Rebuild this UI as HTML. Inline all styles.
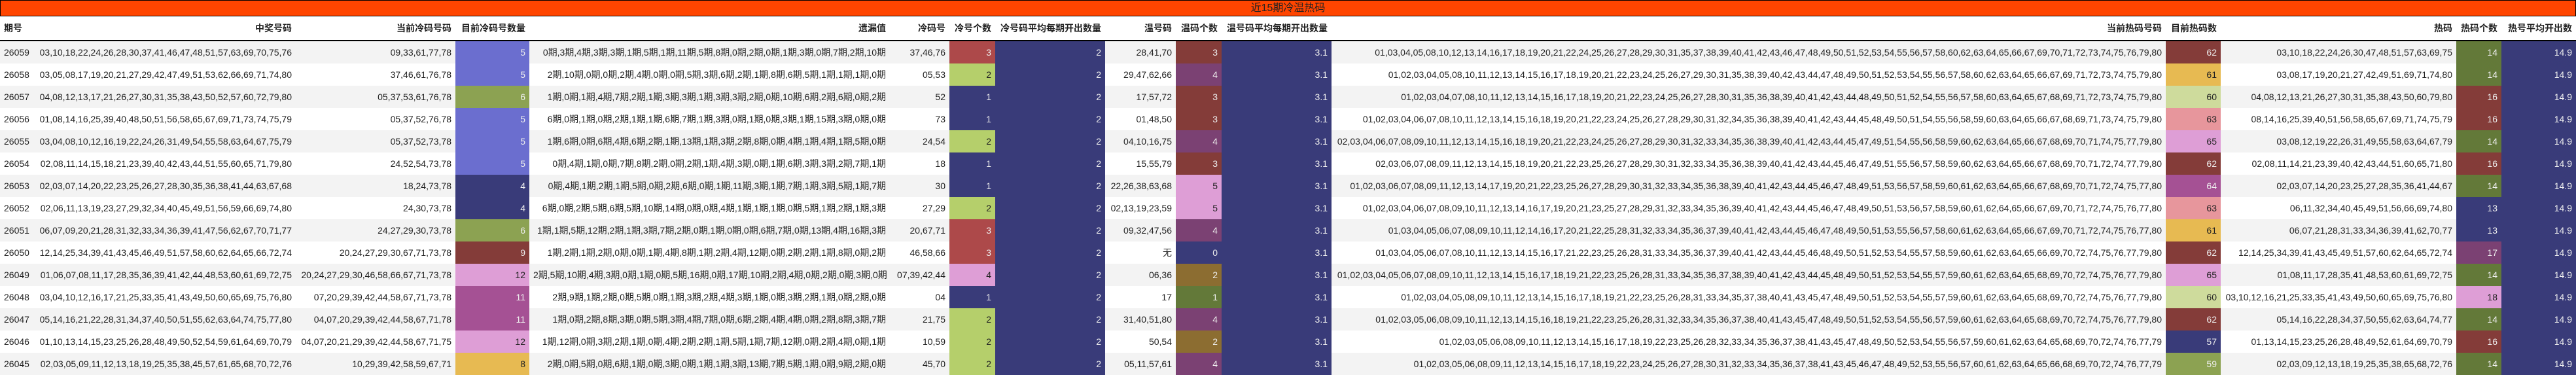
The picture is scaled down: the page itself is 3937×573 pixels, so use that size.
<!DOCTYPE html>
<html><head><meta charset="utf-8">
<style>
html,body{margin:0;padding:0;background:#fff;}
body{width:3937px;height:573px;overflow:hidden;font-family:"Liberation Sans","Noto Sans CJK SC",sans-serif;font-size:14px;color:#222;}
.title{height:23px;border:1px solid #000;background:#ff4500;text-align:center;font-size:16px;line-height:23px;color:#222;}
table{border-collapse:collapse;table-layout:fixed;width:3937px;}
td,th{padding:0 6px;white-space:nowrap;overflow:hidden;text-align:right;}
th{height:36px;font-weight:bold;border-bottom:2px solid #000;}
td{height:34px;}
tr.o td{background:#f3f3f3;}
td.l,th.l{text-align:left;}
.a{background:#6b6ecf!important;color:#eee}
.b{background:#8ca252!important;color:#eee}
.n{background:#393b79!important;color:#eee}
.r{background:#843c39!important;color:#eee}
.p{background:#de9ed6!important;color:#222}
.m{background:#a55194!important;color:#eee}
.y{background:#e7ba52!important;color:#222}
.d{background:#ad494a!important;color:#eee}
.g{background:#b5cf6b!important;color:#222}
.v{background:#7b4173!important;color:#eee}
.c{background:#cedb9c!important;color:#222}
.s{background:#e7969c!important;color:#222}
.k{background:#8c6d31!important;color:#eee}
.o2{background:#637939!important;color:#eee}
</style></head><body>
<div class="title">近15期冷温热码</div>
<table>
<colgroup><col style="width:54px"><col style="width:398px"><col style="width:244px"><col style="width:113px"><col style="width:551px"><col style="width:91px"><col style="width:70px"><col style="width:168px"><col style="width:108px"><col style="width:70px"><col style="width:168px"><col style="width:1275px"><col style="width:84px"><col style="width:360px"><col style="width:69px"><col style="width:114px"></colgroup>
<tr><th class="l">期号</th><th>中奖号码</th><th>当前冷码号码</th><th>目前冷码号数量</th><th>遗漏值</th><th>冷码号</th><th>冷号个数</th><th>冷号码平均每期开出数量</th><th>温号码</th><th>温码个数</th><th>温号码平均每期开出数量</th><th>当前热码号码</th><th>目前热码数</th><th>热码</th><th>热码个数</th><th>热号平均开出数</th></tr>
<tr class="o"><td class="l">26059</td><td>03,10,18,22,24,26,28,30,37,41,46,47,48,51,57,63,69,70,75,76</td><td>09,33,61,77,78</td><td class="a">5</td><td>0期,3期,4期,3期,3期,1期,5期,1期,11期,5期,8期,0期,2期,0期,1期,3期,0期,7期,2期,10期</td><td>37,46,76</td><td class="d">3</td><td class="n">2</td><td>28,41,70</td><td class="r">3</td><td class="n">3.1</td><td>01,03,04,05,08,10,12,13,14,16,17,18,19,20,21,22,24,25,26,27,28,29,30,31,35,37,38,39,40,41,42,43,46,47,48,49,50,51,52,53,54,55,56,57,58,60,62,63,64,65,66,67,69,70,71,72,73,74,75,76,79,80</td><td class="r">62</td><td>03,10,18,22,24,26,30,47,48,51,57,63,69,75</td><td class="o2">14</td><td class="n">14.9</td></tr>
<tr><td class="l">26058</td><td>03,05,08,17,19,20,21,27,29,42,47,49,51,53,62,66,69,71,74,80</td><td>37,46,61,76,78</td><td class="a">5</td><td>2期,10期,0期,0期,2期,4期,0期,0期,5期,3期,6期,2期,1期,8期,6期,5期,1期,1期,1期,0期</td><td>05,53</td><td class="g">2</td><td class="n">2</td><td>29,47,62,66</td><td class="v">4</td><td class="n">3.1</td><td>01,02,03,04,05,08,10,11,12,13,14,15,16,17,18,19,20,21,22,23,24,25,26,27,29,30,31,35,38,39,40,42,43,44,47,48,49,50,51,52,53,54,55,56,57,58,60,62,63,64,65,66,67,69,71,72,73,74,75,79,80</td><td class="y">61</td><td>03,08,17,19,20,21,27,42,49,51,69,71,74,80</td><td class="o2">14</td><td class="n">14.9</td></tr>
<tr class="o"><td class="l">26057</td><td>04,08,12,13,17,21,26,27,30,31,35,38,43,50,52,57,60,72,79,80</td><td>05,37,53,61,76,78</td><td class="b">6</td><td>1期,0期,1期,4期,7期,2期,1期,3期,3期,1期,3期,3期,2期,0期,10期,6期,2期,6期,0期,2期</td><td>52</td><td class="n">1</td><td class="n">2</td><td>17,57,72</td><td class="r">3</td><td class="n">3.1</td><td>01,02,03,04,07,08,10,11,12,13,14,15,16,17,18,19,20,21,22,23,24,25,26,27,28,30,31,35,36,38,39,40,41,42,43,44,48,49,50,51,52,54,55,56,57,58,60,63,64,65,67,68,69,71,72,73,74,75,79,80</td><td class="c">60</td><td>04,08,12,13,21,26,27,30,31,35,38,43,50,60,79,80</td><td class="r">16</td><td class="n">14.9</td></tr>
<tr><td class="l">26056</td><td>01,08,14,16,25,39,40,48,50,51,56,58,65,67,69,71,73,74,75,79</td><td>05,37,52,76,78</td><td class="a">5</td><td>6期,0期,1期,0期,2期,1期,1期,6期,7期,1期,3期,0期,1期,0期,3期,1期,15期,3期,0期,0期</td><td>73</td><td class="n">1</td><td class="n">2</td><td>01,48,50</td><td class="r">3</td><td class="n">3.1</td><td>01,02,03,04,06,07,08,10,11,12,13,14,15,16,18,19,20,21,22,23,24,25,26,27,28,29,30,31,32,34,35,36,38,39,40,41,42,43,44,45,48,49,50,51,54,55,56,58,59,60,63,64,65,66,67,68,69,71,73,74,75,79,80</td><td class="s">63</td><td>08,14,16,25,39,40,51,56,58,65,67,69,71,74,75,79</td><td class="r">16</td><td class="n">14.9</td></tr>
<tr class="o"><td class="l">26055</td><td>03,04,08,10,12,16,19,22,24,26,31,49,54,55,58,63,64,67,75,79</td><td>05,37,52,73,78</td><td class="a">5</td><td>1期,6期,0期,6期,4期,6期,2期,1期,13期,1期,3期,2期,8期,0期,4期,1期,4期,1期,5期,0期</td><td>24,54</td><td class="g">2</td><td class="n">2</td><td>04,10,16,75</td><td class="v">4</td><td class="n">3.1</td><td>02,03,04,06,07,08,09,10,11,12,13,14,15,16,18,19,20,21,22,23,24,25,26,27,28,29,30,31,32,33,34,35,36,38,39,40,41,42,43,44,45,47,49,51,54,55,56,58,59,60,62,63,64,65,66,67,68,69,70,71,74,75,77,79,80</td><td class="p">65</td><td>03,08,12,19,22,26,31,49,55,58,63,64,67,79</td><td class="o2">14</td><td class="n">14.9</td></tr>
<tr><td class="l">26054</td><td>02,08,11,14,15,18,21,23,39,40,42,43,44,51,55,60,65,71,79,80</td><td>24,52,54,73,78</td><td class="a">5</td><td>0期,4期,1期,0期,7期,8期,2期,0期,2期,1期,4期,3期,0期,1期,6期,3期,3期,2期,7期,1期</td><td>18</td><td class="n">1</td><td class="n">2</td><td>15,55,79</td><td class="r">3</td><td class="n">3.1</td><td>02,03,06,07,08,09,11,12,13,14,15,18,19,20,21,22,23,25,26,27,28,29,30,31,32,33,34,35,36,38,39,40,41,42,43,44,45,46,47,49,51,55,56,57,58,59,60,62,63,64,65,66,67,68,69,70,71,72,74,77,79,80</td><td class="r">62</td><td>02,08,11,14,21,23,39,40,42,43,44,51,60,65,71,80</td><td class="r">16</td><td class="n">14.9</td></tr>
<tr class="o"><td class="l">26053</td><td>02,03,07,14,20,22,23,25,26,27,28,30,35,36,38,41,44,63,67,68</td><td>18,24,73,78</td><td class="n">4</td><td>0期,4期,1期,2期,1期,5期,0期,2期,6期,0期,1期,11期,3期,1期,7期,1期,3期,5期,1期,7期</td><td>30</td><td class="n">1</td><td class="n">2</td><td>22,26,38,63,68</td><td class="p">5</td><td class="n">3.1</td><td>01,02,03,06,07,08,09,11,12,13,14,17,19,20,21,22,23,25,26,27,28,29,30,31,32,33,34,35,36,38,39,40,41,42,43,44,45,46,47,48,49,51,53,56,57,58,59,60,61,62,63,64,65,66,67,68,69,70,71,72,74,75,77,80</td><td class="m">64</td><td>02,03,07,14,20,23,25,27,28,35,36,41,44,67</td><td class="o2">14</td><td class="n">14.9</td></tr>
<tr><td class="l">26052</td><td>02,06,11,13,19,23,27,29,32,34,40,45,49,51,56,59,66,69,74,80</td><td>24,30,73,78</td><td class="n">4</td><td>6期,0期,2期,5期,6期,5期,10期,14期,0期,0期,4期,1期,1期,1期,0期,5期,1期,2期,1期,3期</td><td>27,29</td><td class="g">2</td><td class="n">2</td><td>02,13,19,23,59</td><td class="p">5</td><td class="n">3.1</td><td>01,02,03,04,06,07,08,09,10,11,12,13,14,16,17,19,20,21,23,25,27,28,29,31,32,33,34,35,36,39,40,41,42,43,44,45,46,47,48,49,50,51,53,56,57,58,59,60,61,62,64,65,66,67,69,70,71,72,74,75,76,77,80</td><td class="s">63</td><td>06,11,32,34,40,45,49,51,56,66,69,74,80</td><td class="n">13</td><td class="n">14.9</td></tr>
<tr class="o"><td class="l">26051</td><td>06,07,09,20,21,28,31,32,33,34,36,39,41,47,56,62,67,70,71,77</td><td>24,27,29,30,73,78</td><td class="b">6</td><td>1期,1期,5期,12期,2期,1期,3期,7期,2期,0期,1期,0期,0期,6期,7期,0期,13期,4期,16期,3期</td><td>20,67,71</td><td class="d">3</td><td class="n">2</td><td>09,32,47,56</td><td class="v">4</td><td class="n">3.1</td><td>01,03,04,05,06,07,08,09,10,11,12,14,16,17,20,21,22,25,28,31,32,33,34,35,36,37,39,40,41,42,43,44,45,46,47,48,49,50,51,53,55,56,57,58,60,61,62,63,64,65,66,67,69,70,71,72,74,75,76,77,80</td><td class="y">61</td><td>06,07,21,28,31,33,34,36,39,41,62,70,77</td><td class="n">13</td><td class="n">14.9</td></tr>
<tr><td class="l">26050</td><td>12,14,25,34,39,41,43,45,46,49,51,57,58,60,62,64,65,66,72,74</td><td>20,24,27,29,30,67,71,73,78</td><td class="r">9</td><td>1期,2期,1期,2期,0期,0期,1期,4期,8期,1期,2期,4期,12期,0期,2期,2期,1期,8期,0期,2期</td><td>46,58,66</td><td class="d">3</td><td class="n">2</td><td>无</td><td class="n">0</td><td class="n">3.1</td><td>01,03,04,05,06,07,08,10,11,12,13,14,15,16,17,21,22,23,25,26,28,31,33,34,35,36,37,39,40,41,42,43,44,45,46,48,49,50,51,52,53,54,55,57,58,59,60,61,62,63,64,65,66,69,70,72,74,75,76,77,79,80</td><td class="r">62</td><td>12,14,25,34,39,41,43,45,49,51,57,60,62,64,65,72,74</td><td class="v">17</td><td class="n">14.9</td></tr>
<tr class="o"><td class="l">26049</td><td>01,06,07,08,11,17,28,35,36,39,41,42,44,48,53,60,61,69,72,75</td><td>20,24,27,29,30,46,58,66,67,71,73,78</td><td class="p">12</td><td>2期,5期,10期,4期,3期,0期,1期,0期,5期,16期,0期,17期,10期,2期,4期,0期,2期,0期,3期,0期</td><td>07,39,42,44</td><td class="p">4</td><td class="n">2</td><td>06,36</td><td class="k">2</td><td class="n">3.1</td><td>01,02,03,04,05,06,07,08,09,10,11,12,13,14,15,16,17,18,19,21,22,23,25,26,28,31,33,34,35,36,37,38,39,40,41,42,43,44,45,48,49,50,51,52,53,54,55,57,59,60,61,62,63,64,65,68,69,70,72,74,75,76,77,79,80</td><td class="p">65</td><td>01,08,11,17,28,35,41,48,53,60,61,69,72,75</td><td class="o2">14</td><td class="n">14.9</td></tr>
<tr><td class="l">26048</td><td>03,04,10,12,16,17,21,25,33,35,41,43,49,50,60,65,69,75,76,80</td><td>07,20,29,39,42,44,58,67,71,73,78</td><td class="m">11</td><td>2期,9期,1期,2期,0期,5期,0期,1期,3期,2期,4期,3期,1期,0期,3期,2期,1期,0期,2期,0期</td><td>04</td><td class="n">1</td><td class="n">2</td><td>17</td><td class="o2">1</td><td class="n">3.1</td><td>01,02,03,04,05,08,09,10,11,12,13,14,15,16,17,18,19,21,22,23,25,26,28,31,33,34,35,37,38,40,41,43,45,47,48,49,50,51,52,53,54,55,57,59,60,61,62,63,64,65,68,69,70,72,74,75,76,77,79,80</td><td class="c">60</td><td>03,10,12,16,21,25,33,35,41,43,49,50,60,65,69,75,76,80</td><td class="p">18</td><td class="n">14.9</td></tr>
<tr class="o"><td class="l">26047</td><td>05,14,16,21,22,28,31,34,37,40,50,51,55,62,63,64,74,75,77,80</td><td>04,07,20,29,39,42,44,58,67,71,78</td><td class="m">11</td><td>1期,0期,2期,8期,3期,0期,5期,3期,4期,7期,0期,6期,2期,4期,4期,0期,2期,8期,3期,7期</td><td>21,75</td><td class="g">2</td><td class="n">2</td><td>31,40,51,80</td><td class="v">4</td><td class="n">3.1</td><td>01,02,03,05,06,08,09,10,11,12,13,14,15,16,18,19,21,22,23,25,26,28,31,32,33,34,35,36,37,38,40,41,43,45,47,48,49,50,51,52,53,54,55,56,57,59,60,61,62,63,64,65,68,69,70,72,74,75,76,77,79,80</td><td class="r">62</td><td>05,14,16,22,28,34,37,50,55,62,63,64,74,77</td><td class="o2">14</td><td class="n">14.9</td></tr>
<tr><td class="l">26046</td><td>01,10,13,14,15,23,25,26,28,48,49,50,52,54,59,61,64,69,70,79</td><td>04,07,20,21,29,39,42,44,58,67,71,75</td><td class="p">12</td><td>1期,12期,0期,3期,2期,1期,0期,4期,2期,2期,1期,5期,1期,7期,12期,0期,2期,4期,0期,1期</td><td>10,59</td><td class="g">2</td><td class="n">2</td><td>50,54</td><td class="k">2</td><td class="n">3.1</td><td>01,02,03,05,06,08,09,10,11,12,13,14,15,16,17,18,19,22,23,25,26,28,32,33,34,35,36,37,38,41,43,45,47,48,49,50,52,53,54,55,56,57,59,60,61,62,63,64,65,68,69,70,72,74,76,77,79</td><td class="n">57</td><td>01,13,14,15,23,25,26,28,48,49,52,61,64,69,70,79</td><td class="r">16</td><td class="n">14.9</td></tr>
<tr class="o"><td class="l">26045</td><td>02,03,05,09,11,12,13,18,19,25,35,38,45,57,61,65,68,70,72,76</td><td>10,29,39,42,58,59,67,71</td><td class="y">8</td><td>2期,0期,5期,0期,6期,1期,0期,3期,0期,1期,1期,3期,13期,7期,5期,1期,0期,9期,2期,0期</td><td>45,70</td><td class="g">2</td><td class="n">2</td><td>05,11,57,61</td><td class="v">4</td><td class="n">3.1</td><td>01,02,03,05,06,08,09,11,12,13,14,15,16,17,18,19,22,23,24,25,26,27,28,30,31,32,33,34,35,36,37,38,41,43,45,46,47,48,49,52,53,55,56,57,60,61,62,63,64,65,66,68,69,70,72,74,76,77,79</td><td class="b">59</td><td>02,03,09,12,13,18,19,25,35,38,65,68,72,76</td><td class="o2">14</td><td class="n">14.9</td></tr>
</table>
</body></html>
